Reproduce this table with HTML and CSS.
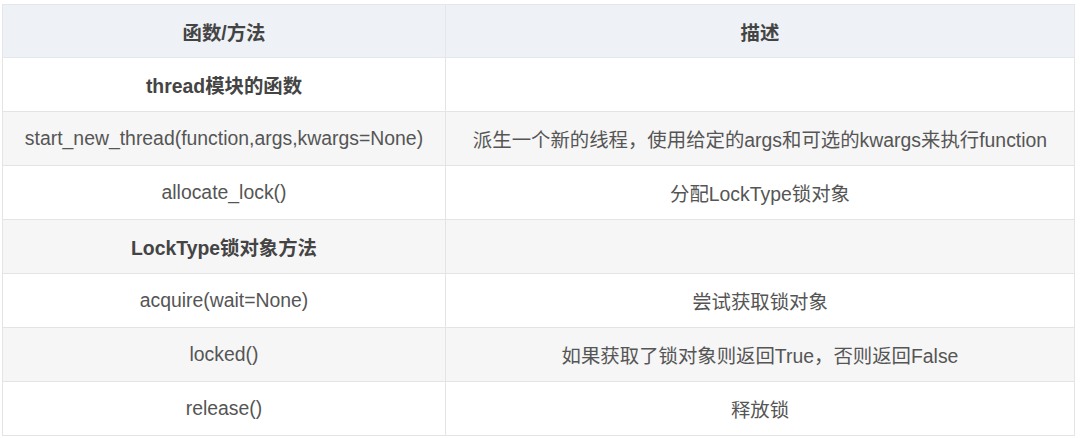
FILE: index.html
```html
<!DOCTYPE html>
<html lang="zh">
<head>
<meta charset="utf-8">
<title>thread模块</title>
<link rel="stylesheet" href="styles.css">
</head>
<body>
<table class="api-table">
  <thead>
    <tr class="head-row">
      <th class="col-fn">函数/方法</th>
      <th class="col-desc">描述</th>
    </tr>
  </thead>
  <tbody>
    <tr class="row"><td class="cell section">thread模块的函数</td><td class="cell"></td></tr>
    <tr class="row alt"><td class="cell">start_new_thread(function,args,kwargs=None)</td><td class="cell">派生一个新的线程，使用给定的args和可选的kwargs来执行function</td></tr>
    <tr class="row"><td class="cell">allocate_lock()</td><td class="cell">分配LockType锁对象</td></tr>
    <tr class="row alt"><td class="cell section">LockType锁对象方法</td><td class="cell"></td></tr>
    <tr class="row"><td class="cell">acquire(wait=None)</td><td class="cell">尝试获取锁对象</td></tr>
    <tr class="row alt"><td class="cell">locked()</td><td class="cell">如果获取了锁对象则返回True，否则返回False</td></tr>
    <tr class="row"><td class="cell">release()</td><td class="cell">释放锁</td></tr>
  </tbody>
</table>
</body>
</html>
```
FILE: styles.css
```css
html, body {
  margin: 0;
  padding: 0;
  background: #ffffff;
}
body {
  padding: 4px 0 0 2px;
  font-family: "Liberation Sans", "Noto Sans CJK SC", sans-serif;
  font-size: 19.4px;
  color: #555555;
}
.api-table {
  width: 1073px;
  border-collapse: collapse;
  border: 1px solid #e2e2e2;
  table-layout: fixed;
}
.col-fn {
  width: 442px;
}
.head-row {
  height: 53px;
  background: #eef1f5;
}
.head-row th {
  font-weight: bold;
  color: #444444;
  text-align: center;
  border: 1px solid #e4e6e9;
  padding: 0;
}
.row {
  height: 54px;
  background: #ffffff;
}
.row.alt {
  background: #f6f6f6;
}
.cell {
  text-align: center;
  border: 1px solid #e4e4e4;
  padding: 0;
  white-space: nowrap;
}
.cell.section {
  font-weight: bold;
  color: #444444;
}
```
